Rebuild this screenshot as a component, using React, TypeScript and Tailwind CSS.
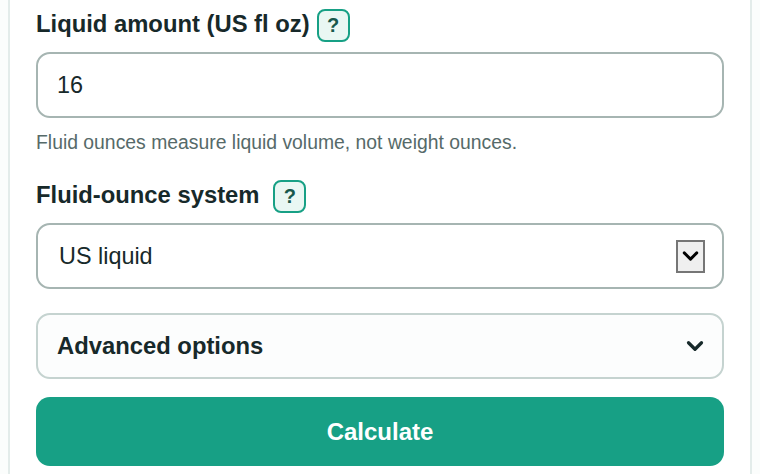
import { ChevronDown } from "lucide-react";

function HelpButton() {
  return (
    <span className="inline-flex h-[33px] w-[33px] items-center justify-center rounded-[8px] border-2 border-[#17a085] bg-[#e9f7f3] text-[20px] font-bold text-[#17584c]">
      ?
    </span>
  );
}

export default function App() {
  return (
    <div className="h-[474px] w-[760px] overflow-hidden bg-[#fbfdfc] px-2 font-['Liberation_Sans',Arial,sans-serif] text-[#17292a]">
      <div className="h-full border-x-2 border-[#e3ecea] bg-white px-[26px] pt-[8px]">
        <div className="flex h-[34px] items-center gap-[7px]">
          <span className="-translate-y-px text-[23.8px] leading-[30px] font-bold">Liquid amount (US fl oz)</span>
          <HelpButton />
        </div>
        <div className="mt-[10px] flex h-[66px] items-center rounded-[14px] border-2 border-[#a6b5b2] bg-white px-[19px] text-[23.4px]">
          <span className="translate-y-px">16</span>
        </div>
        <p className="mt-[12px] text-[19.36px] leading-[24px] text-[#566a69]">
          Fluid ounces measure liquid volume, not weight ounces.
        </p>
        <div className="mt-[25px] flex h-[34px] items-center gap-[14px]">
          <span className="-translate-y-px text-[23.8px] leading-[30px] font-bold">Fluid-ounce system</span>
          <HelpButton />
        </div>
        <div className="mt-[10px] flex h-[66px] items-center justify-between rounded-[14px] border-2 border-[#a6b5b2] bg-white pr-[17px] pl-[21px] text-[23.4px]">
          <span className="translate-y-px">US liquid</span>
          <span className="flex h-[33px] w-[29px] items-center justify-center border-2 border-[#767676] bg-[#efefef] text-black">
            <ChevronDown size={28} strokeWidth={2.8} />
          </span>
        </div>
        <div className="mt-[24px] flex h-[66px] items-center justify-between rounded-[14px] border-2 border-[#c5d3d0] bg-[#fcfdfd] pr-[14px] pl-[19px]">
          <span className="text-[23.8px] font-bold">Advanced options</span>
          <ChevronDown size={26} strokeWidth={3} />
        </div>
        <button
          type="button"
          className="mt-[18px] flex h-[69px] w-full items-center justify-center rounded-[14px] bg-[#17a085] text-[24px] font-bold text-white"
        >
          Calculate
        </button>
      </div>
    </div>
  );
}
